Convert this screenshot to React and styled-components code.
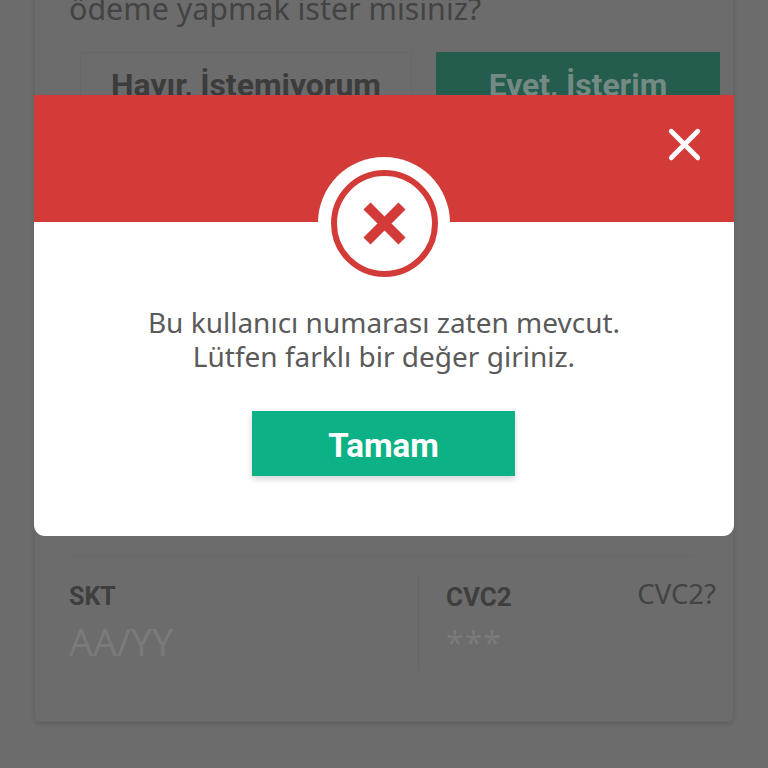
import React from "react";
import styled, { createGlobalStyle } from "styled-components";
import { X } from "lucide-react";

const GlobalStyle = createGlobalStyle`
  html, body {
    margin: 0;
    padding: 0;
    background: #6c6c6c;
  }
  * {
    box-sizing: border-box;
  }
`;

const Page = styled.div`
  position: relative;
  width: 768px;
  height: 768px;
  overflow: hidden;
  background: #6c6c6c;
  font-family: "Noto Sans", sans-serif;
`;

const Card = styled.section`
  width: 700px;
  height: 742px;
  margin: -20px 0 0 34px;
  padding: 8px 13px 0 34px;
  border: 1px solid #676767;
  border-radius: 6px;
  box-shadow: 0 3px 4px rgba(0, 0, 0, 0.1);
`;

const Question = styled.p`
  margin: 0;
  font-size: 30.4px;
  line-height: 40px;
  color: #434343;
`;

const Answers = styled.div`
  display: flex;
  gap: 24px;
  margin: 23px 0 0 11px;
`;

const Answer = styled.button`
  flex: none;
  height: 66px;
  width: ${(p) => (p.$primary ? "284px" : "332px")};
  border: ${(p) => (p.$primary ? "none" : "1px solid #676767")};
  padding: 0;
  background: ${(p) => (p.$primary ? "#245c4d" : "transparent")};
  color: ${(p) => (p.$primary ? "#748a84" : "#3c3c3c")};
  font-family: "Roboto", sans-serif;
  font-weight: 700;
  font-size: 31.9px;
`;

const Rule = styled.div`
  height: 1px;
  margin: 438px 26px 0 2px;
  background: #686868;
`;

const Fields = styled.div`
  display: grid;
  grid-template-columns: 349px 1fr;
  margin-top: 19px;
  height: 95px;
`;

const Field = styled.div`
  position: relative;
  padding-left: ${(p) => (p.$split ? "27px" : "0")};
  border-left: ${(p) => (p.$split ? "1px solid #666" : "none")};
`;

const Label = styled.div`
  font-family: "Roboto", sans-serif;
  font-weight: 700;
  font-size: ${(p) => (p.$large ? "26px" : "25px")};
  line-height: 30px;
  margin-top: 6px;
  color: #3e3e3e;
`;

const Placeholder = styled.div`
  margin-top: 8px;
  font-size: 37.5px;
  line-height: 44px;
  color: #7a7a7a;
`;

const Masked = styled(Placeholder)`
  font-size: 32px;
  letter-spacing: 1px;
  line-height: 46px;
`;

const HelpLink = styled.span`
  position: absolute;
  top: 3px;
  right: 4px;
  font-size: 27.5px;
  line-height: 30px;
  color: #434343;
`;

const Overlay = styled.div`
  position: absolute;
  inset: 0;
  padding: 95px 34px 0;
`;

const Modal = styled.div`
  position: relative;
  height: 441px;
  background: #fff;
  border-radius: 0 0 11px 11px;
  overflow: hidden;
`;

const ModalHeader = styled.header`
  display: flex;
  justify-content: flex-end;
  height: 127px;
  padding: 23px 23px 0 0;
  background: #d33b38;
`;

const CloseIcon = styled(X)`
  display: block;
  color: #fff;
`;

const Badge = styled.div`
  position: absolute;
  top: 62px;
  left: 284px;
  width: 132px;
  height: 132px;
  display: flex;
  align-items: center;
  justify-content: center;
  background: #fff;
  border-radius: 50%;
`;

const BadgeIcon = styled.svg`
  display: block;
  width: 107px;
  height: 107px;
`;

const ModalBody = styled.div`
  display: flex;
  flex-direction: column;
  align-items: center;
  padding-top: 83px;
`;

const Message = styled.p`
  margin: 0;
  font-size: 28px;
  line-height: 34px;
  text-align: center;
  color: #5a5a5a;
`;

const OkButton = styled.button`
  width: 263px;
  height: 65px;
  margin: 38px 1px 0 0;
  border: none;
  padding: 3px 0 0;
  background: #0cb286;
  box-shadow: 0 3px 6px rgba(0, 0, 0, 0.18);
  color: #fff;
  font-family: "Roboto", sans-serif;
  font-weight: 700;
  font-size: 33px;
`;

const App = () => {
  return (
    <Page>
      <GlobalStyle />
      <Card>
        <Question>ödeme yapmak ister misiniz?</Question>
        <Answers>
          <Answer>Hayır, İstemiyorum</Answer>
          <Answer $primary>Evet, İsterim</Answer>
        </Answers>
        <Rule />
        <Fields>
          <Field>
            <Label>SKT</Label>
            <Placeholder>AA/YY</Placeholder>
          </Field>
          <Field $split>
            <Label $large>CVC2</Label>
            <Masked>***</Masked>
            <HelpLink>CVC2?</HelpLink>
          </Field>
        </Fields>
      </Card>
      <Overlay>
        <Modal>
          <ModalHeader>
            <CloseIcon size={53} strokeWidth={2.2} />
          </ModalHeader>
          <Badge>
            <BadgeIcon viewBox="0 0 107 107">
              <circle cx="53.5" cy="53.5" r="50.5" fill="none" stroke="#d33b38" strokeWidth="6" />
              <path d="M36 36 L71 71 M71 36 L36 71" fill="none" stroke="#d33b38" strokeWidth="10" />
            </BadgeIcon>
          </Badge>
          <ModalBody>
            <Message>
              Bu kullanıcı numarası zaten mevcut.
              <br />
              Lütfen farklı bir değer giriniz.
            </Message>
            <OkButton>Tamam</OkButton>
          </ModalBody>
        </Modal>
      </Overlay>
    </Page>
  );
};

export default App;
